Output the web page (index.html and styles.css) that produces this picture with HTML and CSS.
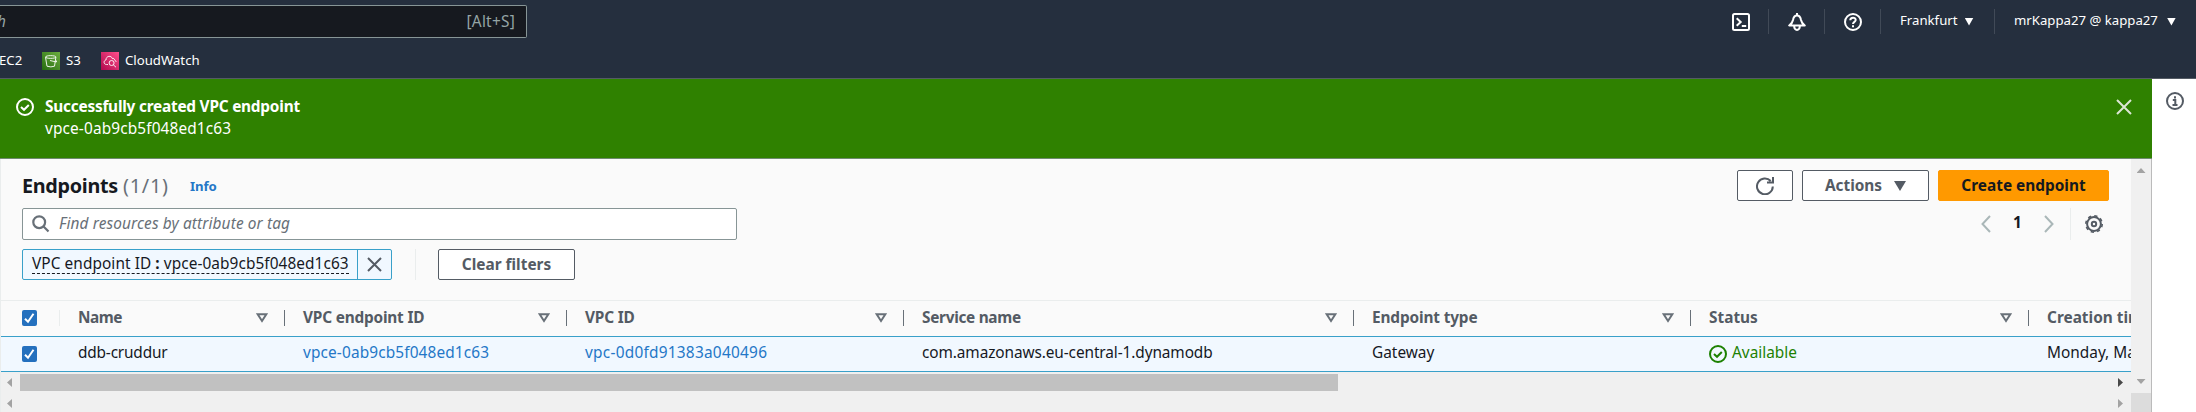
FILE: index.html
```html
<!DOCTYPE html>
<html lang="en">
<head>
<meta charset="utf-8">
<title>Endpoints | VPC Management Console</title>
<link rel="stylesheet" href="styles.css">
</head>
<body>
<header class="topnav">
  <div class="topnav-row">
    <div class="search"><span class="search-hint">h</span><span class="search-key">[Alt+S]</span></div>
    <div class="nav-tools">
      <div class="tool"><svg width="18" height="18" viewBox="0 0 18 18" fill="none" stroke="#fff" stroke-width="2"><rect x="1" y="1" width="16" height="16" rx="1.5"/><path d="M4.700 5.200 8.700 9l-4 3.800M9.800 13h4.400"/></svg></div>
      <div class="tool"><svg width="18" height="18" viewBox="0 0 18 18" fill="none" stroke="#fff" stroke-width="2" stroke-linejoin="round"><path d="M9 0v2M1.200 12.500h15.600c-2.700-1.800-3.300-3-3.800-5.500C12.500 4 11.200 2.400 9 2.400S5.500 4 5 7c-.5 2.500-1.100 3.700-3.800 5.500zM6.200 13.500a2.800 3.400 0 0 0 5.600 0"/></svg></div>
      <div class="tool"><svg width="18" height="18" viewBox="0 0 18 18" fill="none" stroke="#fff" stroke-width="2"><circle cx="9" cy="9" r="8"/><path d="M6.300 7.200C6.300 3.700 11.800 3.900 11.700 7c0 1.900-2.700 1.800-2.700 4M9 12.300v2"/></svg></div>
      <div class="menu region"><span class="t-region">Frankfurt</span><i class="caret"></i></div>
      <div class="menu account"><span class="t-account">mrKappa27 @ kappa27</span><i class="caret"></i></div>
    </div>
  </div>
  <nav class="favorites">
    <span class="t-ec2">EC2</span>
    <span class="fav s3"><svg class="fav-icon" width="18" height="18" viewBox="0 0 18 18"><defs><linearGradient id="g" x1="0" y1="1" x2="1" y2="0"><stop stop-color="#256b10"/><stop offset="1" stop-color="#6cae3e"/></linearGradient></defs><path fill="url(#g)" d="M0 0h18v18H0z"/><path d="M3.500 5.200 5 14.200q4 1.400 7.500 0l1.400-9M3.500 5c0-1.800 10.500-1.800 10.500 0s-10.500 1.800-10.500 0M8 8.500l6.300 1.500q1.200-.8-.8-2" fill="none" stroke="#fff" stroke-width=".9"/></svg><span class="fav-label">S3</span></span>
    <span class="fav"><svg class="fav-icon" width="18" height="18" viewBox="0 0 18 18"><defs><linearGradient id="p" x1="0" y1="1" x2="1" y2="0"><stop stop-color="#b0084d"/><stop offset="1" stop-color="#ff4f8b"/></linearGradient></defs><path fill="url(#p)" d="M0 0h18v18H0z"/><path d="M7 12.500H5.400c-3-.2-3-4-.4-4.500 0-4.500 5.500-4.700 6.300-1.500 1.500-.5 2.300.5 2.200 1.500 1 .3 1.600 1 1.500 2M12.300 12.800l2.700 2.400" fill="none" stroke="#fff" stroke-width=".9"/><circle cx="10.600" cy="11" r="2.500" fill="none" stroke="#fff" stroke-width=".9"/></svg><span class="fav-label">CloudWatch</span></span>
  </nav>
</header>
<div class="page">
  <main class="content">
    <section class="flash">
      <svg class="flash-icon" width="18" height="18" viewBox="0 0 18 18" fill="none" stroke="#fff" stroke-width="2"><circle cx="9" cy="9" r="8"/><path d="M5 9l3 2.800L12.800 7"/></svg>
      <div class="flash-text"><strong class="t-flash">Successfully created VPC endpoint</strong><span class="t-id">vpce-0ab9cb5f048ed1c63</span></div>
      <svg class="flash-close" width="16" height="16" viewBox="0 0 16 16" fill="none" stroke="#dce6d5" stroke-width="2"><path d="M1 1l14 14M15 1 1 15"/></svg>
    </section>
    <div class="body">
      <div class="panel">
        <div class="tools">
          <div class="title-row">
            <h1><span class="t-title">Endpoints</span> <span class="count">(1/1)</span></h1><a class="info">Info</a>
            <div class="actions">
              <button class="btn refresh"><svg width="18" height="18" viewBox="0 0 18 18" fill="none" stroke="#545b64" stroke-width="2"><path d="M16.800 9.500A7.900 7.900 0 1 1 14.700 4M17 0v5.500h-6"/></svg></button>
              <button class="btn menu-btn"><span class="t-actions">Actions</span><svg width="12" height="10" viewBox="0 0 12 10"><path d="M0 0h12L6 10z" fill="#545b64"/></svg></button>
              <button class="btn primary"><span class="t-create">Create endpoint</span></button>
            </div>
          </div>
          <div class="filter-row">
            <div class="filter"><svg width="18" height="18" viewBox="0 0 18 18" fill="none" stroke="#687078" stroke-width="2.200"><circle cx="7.200" cy="7.200" r="5.900"/><path d="M11.300 11.300l5.200 5.200"/></svg><span class="placeholder">Find resources by attribute or tag</span></div>
            <div class="pager">
              <svg width="10" height="18" viewBox="0 0 10 18" fill="none" stroke="#aab7b8" stroke-width="2"><path d="M9 1 1.500 9 9 17"/></svg>
              <b>1</b>
              <svg width="10" height="18" viewBox="0 0 10 18" fill="none" stroke="#aab7b8" stroke-width="2"><path d="M1 1l7.500 8L1 17"/></svg>
              <span class="gear"><svg width="18" height="18" viewBox="0 0 18 18" fill="none" stroke="#545b64"><circle cx="9" cy="9" r="6.900" stroke-width="2"/><circle cx="9" cy="9" r="8.200" stroke-width="1.600" stroke-dasharray="3.220 3.220"/><circle cx="9" cy="9" r="2.200" stroke-width="2"/></svg></span>
            </div>
          </div>
          <div class="token-row">
            <div class="token"><span class="token-text"><span class="t-token">VPC endpoint ID <b>:</b> vpce-0ab9cb5f048ed1c63</span></span><span class="token-x"><svg width="15" height="15" viewBox="0 0 15 15" stroke="#545b64" stroke-width="2"><path d="M1 1l13 13M14 1 1 14"/></svg></span></div>
            <span class="rule"></span>
            <button class="btn clear"><span class="t-clear">Clear filters</span></button>
          </div>
        </div>
        <div class="table">
          <div class="row head">
            <div class="cell check"><svg width="15" height="16" viewBox="0 0 15 16"><rect width="15" height="16" rx="2" fill="#2470be"/><path d="M3 8.800l3 3 5.500-8" fill="none" stroke="#fff" stroke-width="2"/></svg></div>
            <div class="cell"><span class="h-name">Name</span><svg class="sort" width="12" height="10" viewBox="0 0 12 10"><path d="M1.700 1.200h8.600L6 8z"/></svg></div>
            <div class="cell"><span class="h-vpce">VPC endpoint ID</span><svg class="sort" width="12" height="10" viewBox="0 0 12 10"><path d="M1.700 1.200h8.600L6 8z"/></svg></div>
            <div class="cell"><span class="h-vpc">VPC ID</span><svg class="sort" width="12" height="10" viewBox="0 0 12 10"><path d="M1.700 1.200h8.600L6 8z"/></svg></div>
            <div class="cell"><span class="h-service">Service name</span><svg class="sort" width="12" height="10" viewBox="0 0 12 10"><path d="M1.700 1.200h8.600L6 8z"/></svg></div>
            <div class="cell"><span class="h-type">Endpoint type</span><svg class="sort" width="12" height="10" viewBox="0 0 12 10"><path d="M1.700 1.200h8.600L6 8z"/></svg></div>
            <div class="cell"><span class="h-status">Status</span><svg class="sort" width="12" height="10" viewBox="0 0 12 10"><path d="M1.700 1.200h8.600L6 8z"/></svg></div>
            <div class="cell"><span class="h-time">Creation time</span></div>
          </div>
          <div class="row selected">
            <div class="cell check"><svg width="15" height="16" viewBox="0 0 15 16"><rect width="15" height="16" rx="2" fill="#2470be"/><path d="M3 8.800l3 3 5.500-8" fill="none" stroke="#fff" stroke-width="2"/></svg></div>
            <div class="cell"><span class="t-name">ddb-cruddur</span></div>
            <div class="cell"><a class="t-id">vpce-0ab9cb5f048ed1c63</a></div>
            <div class="cell"><a class="t-vpc">vpc-0d0fd91383a040496</a></div>
            <div class="cell"><span class="t-service">com.amazonaws.eu-central-1.dynamodb</span></div>
            <div class="cell"><span class="t-gateway">Gateway</span></div>
            <div class="cell status"><svg width="18" height="18" viewBox="0 0 18 18" fill="none" stroke="#1d8102" stroke-width="2"><circle cx="9" cy="9" r="8"/><path d="M5 9l3 2.800L12.800 7"/></svg><span class="t-available">Available</span></div>
            <div class="cell"><span class="t-time">Monday, March</span></div>
          </div>
        </div>
        <div class="hscroll inner"><i class="arrow left"></i><i class="thumb"></i><i class="arrow right dark"></i></div>
        <div class="hscroll"><i class="arrow left"></i><i class="arrow right"></i></div>
      </div>
      <div class="vscroll"><i class="arrow up"></i><i class="arrow down"></i><i class="corner"></i></div>
    </div>
  </main>
  <aside class="help"><svg width="18" height="18" viewBox="0 0 18 18" fill="none" stroke="#545b64" stroke-width="2"><circle cx="9" cy="9" r="8"/><path d="M6.800 8H9.300v5M6.500 13h5M9 4.300v2.200"/></svg></aside>
</div>
</body>
</html>
```
FILE: styles.css
```css
* { box-sizing: border-box; }
body { margin: 0; width: 2196px; height: 412px; overflow: hidden; font: 15.4px/22px "Noto Sans", "Open Sans", sans-serif; color: #16191f; background: #fff; }
svg { display: block; flex: none; }
span, a, strong { white-space: nowrap; }

.topnav { height: 79px; background: #252f3e; border-bottom: 1px solid #545b64; color: #fff; font-size: 13.2px; }
.topnav-row { height: 43px; display: flex; justify-content: space-between; align-items: flex-start; }
.search { width: 527px; height: 33px; margin-top: 5px; padding: 0 11px 0 0; display: flex; align-items: center; justify-content: space-between; background: #16191f; border: 1px solid #879596; border-left: 0; border-radius: 0 2px 2px 0; color: #95a5a6; font-size: 15.4px; }
.search-hint { font-style: italic; margin-left: -3px; }
.search-key { letter-spacing: .25px; }
.nav-tools { display: flex; padding-top: 9px; height: 34px; }
.tool { width: 56px; display: flex; align-items: center; justify-content: center; padding-top: 1px; border-right: 1px solid #414a57; }
.menu { display: flex; align-items: center; padding-bottom: 3px; }
.region { width: 114px; padding-left: 19px; gap: 7px; border-right: 1px solid #414a57; }
.account { width: 201px; padding-left: 19px; gap: 9px; }
.caret { width: 9px; height: 8px; background: #fff; clip-path: polygon(0 0, 100% 0, 50% 100%); margin-top: 3px; }
.favorites { display: flex; align-items: center; height: 36px; }
.favorites span { line-height: 18px; }
.t-ec2 { width: 43px; margin-left: -1px; margin-top: -2px; }
.fav { display: flex; align-items: center; gap: 6px; }
.fav-label { margin-top: -2px; }
.s3 { width: 59px; }

.page { display: flex; height: 333px; }
.content { width: 2152px; display: flex; flex-direction: column; }
.flash { height: 80px; flex: none; padding: 17px 20px 0 16px; display: flex; background: #2f8100; border-bottom: 1px solid #6f8a70; color: #fff; }
.flash-icon { margin-top: 2px; }
.flash-text { margin-left: 11px; display: flex; flex-direction: column; flex: 1; }
.flash-close { margin-top: 3px; }
.body { flex: 1; min-height: 0; display: flex; border-right: 1px solid #bbb; }
.panel { width: 2131px; overflow: hidden; background: #fafafa; border-left: 1px solid #eaeded; }
.tools { height: 141px; padding: 11px 22px 0 21px; }
.title-row { display: flex; height: 31px; align-items: center; }
h1 { margin: 0; font-size: 19.8px; font-weight: 700; line-height: 30px; white-space: nowrap; width: 168px; }
.count { font-weight: 400; color: #687078; letter-spacing: .75px; }
.info { color: #2477c7; font-weight: 700; font-size: 13.2px; letter-spacing: -.1px; }
.actions { margin-left: auto; display: flex; gap: 9px; }
.btn { height: 31px; padding: 0; display: flex; align-items: center; justify-content: center; font: 700 15.4px/22px "Noto Sans", "Open Sans", sans-serif; color: #545b64; background: #fff; border: 1px solid #545b64; border-radius: 2px; }
.refresh { width: 56px; }
.menu-btn { width: 127px; gap: 12px; }
.primary { width: 171px; background: #f90; border-color: #f90; color: #16191f; }
.filter-row { display: flex; justify-content: space-between; margin-top: 7px; height: 32px; }
.filter { width: 715px; height: 32px; border: 1px solid #879596; border-radius: 2px; background: #fff; display: flex; align-items: center; padding-left: 9px; gap: 9px; }
.placeholder { font-style: italic; color: #687078; letter-spacing: .12px; }
.pager { display: flex; align-items: center; width: 128px; }
.pager b { width: 53px; text-align: center; margin-top: -3px; }
.gear { margin-left: 16px; padding: 7px 0 7px 14px; border-left: 1px solid #eaeded; }
.token-row { display: flex; margin-top: 9px; height: 31px; }
.token { width: 370px; display: flex; border: 1px solid #39a0c9; border-radius: 2px; background: #f1f8ff; }
.token-text { width: 335px; padding: 3px 0 0 9px; border-right: 1px solid #39a0c9; }
.t-token { display: inline-block; height: 21px; line-height: 21px; border-bottom: 1px dashed #16191f; letter-spacing: .07px; }
.token-x { flex: 1; display: grid; place-items: center; }
.rule { width: 1px; background: #eaeded; margin: 0 22px 0 23px; }
.clear { width: 137px; }

.t-flash { letter-spacing: -.23px; }
.t-id { letter-spacing: .13px; }
.t-vpc { letter-spacing: .25px; }
.t-service { letter-spacing: -.1px; }
.t-name { letter-spacing: -.18px; }
.t-title { letter-spacing: -.3px; }
.h-name { letter-spacing: -.5px; }
.h-vpce, .h-vpc { letter-spacing: -.2px; }
.h-service { letter-spacing: -.3px; }
.h-type { letter-spacing: -.15px; }

.table { border-top: 1px solid #eaeded; width: 2300px; margin-left: -1px; }
.row { display: grid; grid-template-columns: 60px 225px 282px 337px 450px 337px 338px 260px; }
.head { height: 35px; font-weight: 700; color: #545b64; }
.selected { height: 36px; background: #f1f8ff; border: solid #39a0c9; border-width: 1px 0; }
.cell { display: flex; align-items: center; padding-left: 18px; }
.head .cell { border-right: 1px solid #687078; height: 16px; margin-top: 9px; justify-content: space-between; padding-right: 16px; }
.head .check { border-color: #eaeded; }
.head .cell:last-child { border: 0; }
.cell.check { padding-left: 22px; }
.selected .cell span, .selected .cell a { margin-top: -2px; }
.sort path { fill: none; stroke: #687078; stroke-width: 2; }
.cell > a { color: #2477c7; }
.status { gap: 5px; color: #1d8102; }

.hscroll { height: 21px; display: flex; align-items: center; background: #f0f0f0; padding-left: 6px; padding-right: 8px; }
.arrow { width: 5px; height: 9px; background: #a3a3a3; flex: none; }
.left { clip-path: polygon(100% 0, 100% 100%, 0 50%); }
.right { clip-path: polygon(0 0, 100% 50%, 0 100%); margin-left: auto; }
.dark { background: #484848; }
.thumb { width: 1318px; height: 17px; margin-left: 8px; background: #c1c1c1; }
.vscroll { width: 20px; background: #f0f0f0; display: flex; flex-direction: column; align-items: center; padding-top: 9px; }
.up, .down { width: 9px; height: 5px; }
.up { clip-path: polygon(50% 0, 100% 100%, 0 100%); }
.down { clip-path: polygon(0 0, 100% 0, 50% 100%); margin-top: auto; }
.corner { width: 20px; height: 19px; background: #dcdcdc; margin-top: 9px; }
.help { width: 44px; padding: 13px 0 0 14px; background: #fff; }
```
